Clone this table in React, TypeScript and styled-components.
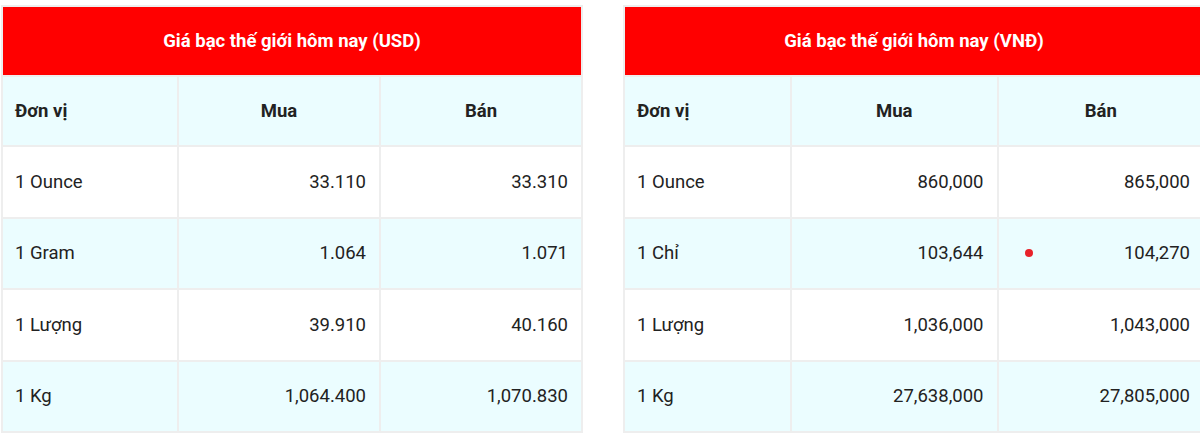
import React from 'react';
import styled, { createGlobalStyle } from 'styled-components';

const GlobalStyle = createGlobalStyle`
    html, body {
        margin: 0;
        padding: 0;
        background: #fff;
        overflow: hidden;
    }
    body {
        font-family: Roboto, "Noto Sans", Arial, sans-serif;
        color: #222;
    }
`;

interface IRow {
    unit: string;
    buy: string;
    sell: string;
    marked?: boolean;
}

interface IPriceTableProps {
    title: string;
    rows: IRow[];
    firstCol: number;
}

const usdRows: IRow[] = [
    { unit: '1 Ounce', buy: '33.110', sell: '33.310' },
    { unit: '1 Gram', buy: '1.064', sell: '1.071' },
    { unit: '1 Lượng', buy: '39.910', sell: '40.160' },
    { unit: '1 Kg', buy: '1,064.400', sell: '1,070.830' }
];

const vndRows: IRow[] = [
    { unit: '1 Ounce', buy: '860,000', sell: '865,000' },
    { unit: '1 Chỉ', buy: '103,644', sell: '104,270', marked: true },
    { unit: '1 Lượng', buy: '1,036,000', sell: '1,043,000' },
    { unit: '1 Kg', buy: '27,638,000', sell: '27,805,000' }
];

const PriceTable: React.FC<IPriceTableProps> = ({ title, rows, firstCol }) => {
    return (
        <Table>
            <colgroup>
                <col style={{ width: firstCol }} />
                <col />
                <col />
            </colgroup>
            <thead>
                <tr>
                    <TitleCell colSpan={3}>{title}</TitleCell>
                </tr>
                <tr>
                    <HeadCell align='left'>Đơn vị</HeadCell>
                    <HeadCell align='center'>Mua</HeadCell>
                    <HeadCell align='center'>Bán</HeadCell>
                </tr>
            </thead>
            <tbody>
                {rows.map((row, i) => (
                    <Row key={row.unit} shaded={i % 2 === 1}>
                        <Cell align='left'>{row.unit}</Cell>
                        <Cell align='right'>{row.buy}</Cell>
                        <Cell align='right'>
                            {row.marked ? (
                                <Marked>
                                    <Dot />
                                    <span>{row.sell}</span>
                                </Marked>
                            ) : row.sell}
                        </Cell>
                    </Row>
                ))}
            </tbody>
        </Table>
    );
};

export default function App() {
    return (
        <>
            <GlobalStyle />
            <Page>
                <PriceTable title='Giá bạc thế giới hôm nay (USD)' rows={usdRows} firstCol={176} />
                <PriceTable title='Giá bạc thế giới hôm nay (VNĐ)' rows={vndRows} firstCol={167} />
            </Page>
        </>
    );
}

const Page = styled.div`
    display: grid;
    grid-template-columns: 582px 582px;
    column-gap: 40px;
    padding: 5px 0 0 1px;
    width: 1205px;
    box-sizing: border-box;
`;
const Table = styled.table`
    width: 100%;
    border-collapse: collapse;
    table-layout: fixed;
    border: 2px solid #eee;
`;
const TitleCell = styled.th`
    background: #ff0000;
    color: #fff;
    font-size: 18.5px;
    font-weight: 700;
    height: 68px;
    padding: 0;
    text-align: center;
    border: 2px solid #eee;
`;
const HeadCell = styled.th<{ align: 'left' | 'center' }>`
    background: #ebfdff;
    font-size: 18.5px;
    font-weight: 700;
    height: 68px;
    padding: 0 12px;
    text-align: ${({ align }) => align};
    border: 2px solid #eee;
`;
const Row = styled.tr<{ shaded: boolean }>`
    background: ${({ shaded }) => (shaded ? '#ebfdff' : '#fff')};
`;
const Cell = styled.td<{ align: 'left' | 'right' }>`
    font-size: 18.5px;
    height: 69.5px;
    padding: 0 13px 0 12px;
    text-align: ${({ align }) => align};
    border: 2px solid #eee;
`;
const Marked = styled.div`
    display: flex;
    align-items: center;
    justify-content: space-between;
    padding-left: 14px;
`;
const Dot = styled.span`
    width: 8px;
    height: 8px;
    border-radius: 50%;
    background: #e8222a;
`;
